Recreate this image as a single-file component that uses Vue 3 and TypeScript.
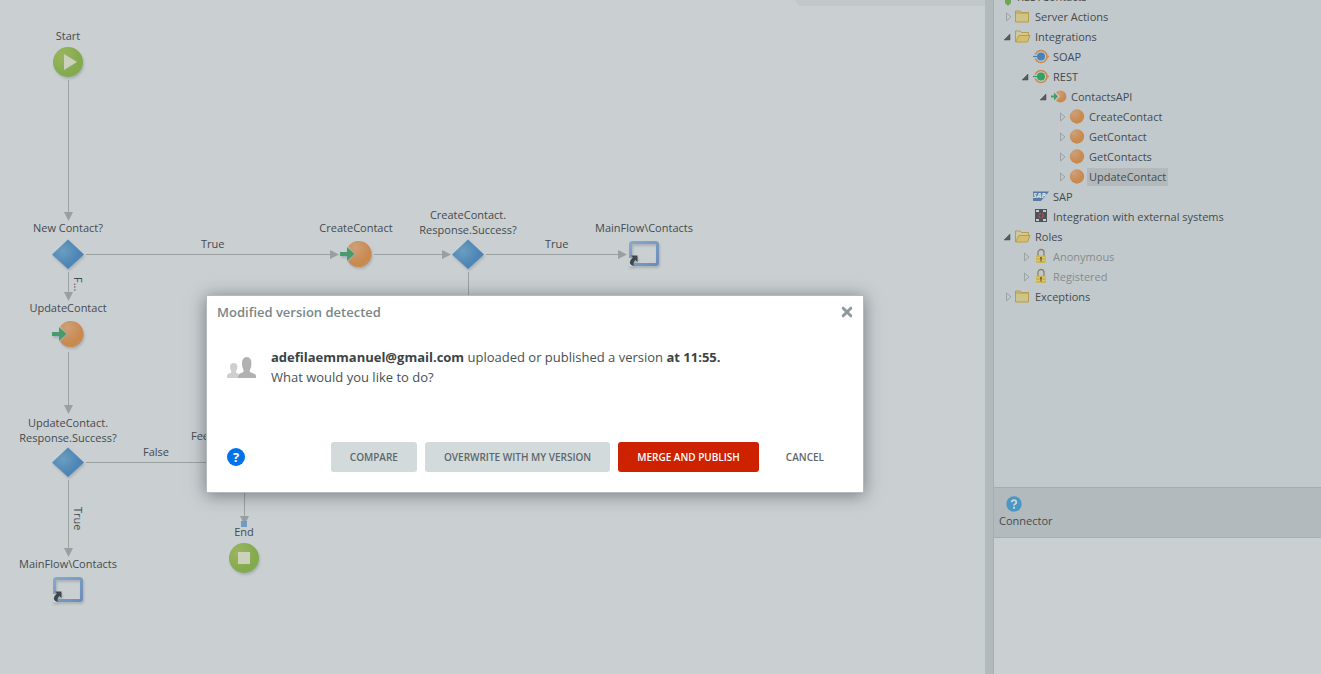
<script setup lang="ts">
type Kind = 'start' | 'end' | 'decision' | 'action' | 'screen'

interface FlowNode {
  kind: Kind
  x: number
  y: number
  label: string[]
}

interface Edge {
  x1: number
  y1: number
  x2: number
  y2: number
  arrow: boolean
}

interface EdgeLabel {
  text: string
  x: number
  y: number
  vertical?: boolean
}

interface TreeRow {
  level: number
  icon: string
  text: string
  toggle?: 'open' | 'closed'
  selected?: boolean
  muted?: boolean
}

const nodes: FlowNode[] = [
  { kind: 'start', x: 68, y: 62, label: ['Start'] },
  { kind: 'decision', x: 68, y: 254, label: ['New Contact?'] },
  { kind: 'action', x: 356, y: 254, label: ['CreateContact'] },
  { kind: 'decision', x: 468, y: 254, label: ['CreateContact.', 'Response.Success?'] },
  { kind: 'screen', x: 644, y: 254, label: ['MainFlow\\Contacts'] },
  { kind: 'action', x: 68, y: 334, label: ['UpdateContact'] },
  { kind: 'decision', x: 68, y: 462, label: ['UpdateContact.', 'Response.Success?'] },
  { kind: 'screen', x: 68, y: 590, label: ['MainFlow\\Contacts'] },
  { kind: 'end', x: 244, y: 558, label: ['End'] },
]

const edges: Edge[] = [
  { x1: 68, y1: 80, x2: 68, y2: 221, arrow: true },
  { x1: 86, y1: 254, x2: 339, y2: 254, arrow: true },
  { x1: 68, y1: 272, x2: 68, y2: 301, arrow: true },
  { x1: 374, y1: 254, x2: 451, y2: 254, arrow: true },
  { x1: 486, y1: 254, x2: 627, y2: 254, arrow: true },
  { x1: 468, y1: 272, x2: 468, y2: 320, arrow: false },
  { x1: 68, y1: 352, x2: 68, y2: 414, arrow: true },
  { x1: 86, y1: 462, x2: 220, y2: 462, arrow: false },
  { x1: 68, y1: 480, x2: 68, y2: 557, arrow: true },
  { x1: 244, y1: 480, x2: 244, y2: 525, arrow: true },
]

const edgeLabels: EdgeLabel[] = [
  { text: 'True', x: 201, y: 236 },
  { text: 'True', x: 545, y: 236 },
  { text: 'False', x: 143, y: 444 },
  { text: 'Fee', x: 191, y: 428 },
  { text: 'F...', x: 71, y: 277, vertical: true },
  { text: 'True', x: 71, y: 507, vertical: true },
]

const rows: TreeRow[] = [
  { level: 0, icon: 'leaf', text: 'RESTContacts' },
  { level: 1, icon: 'folder', text: 'Server Actions', toggle: 'closed' },
  { level: 1, icon: 'folderOpen', text: 'Integrations', toggle: 'open' },
  { level: 2, icon: 'soap', text: 'SOAP' },
  { level: 2, icon: 'rest', text: 'REST', toggle: 'open' },
  { level: 3, icon: 'api', text: 'ContactsAPI', toggle: 'open' },
  { level: 4, icon: 'ball', text: 'CreateContact', toggle: 'closed' },
  { level: 4, icon: 'ball', text: 'GetContact', toggle: 'closed' },
  { level: 4, icon: 'ball', text: 'GetContacts', toggle: 'closed' },
  { level: 4, icon: 'ball', text: 'UpdateContact', toggle: 'closed', selected: true },
  { level: 2, icon: 'sap', text: 'SAP' },
  { level: 2, icon: 'external', text: 'Integration with external systems' },
  { level: 1, icon: 'folderOpen', text: 'Roles', toggle: 'open' },
  { level: 2, icon: 'lock', text: 'Anonymous', toggle: 'closed', muted: true },
  { level: 2, icon: 'lock', text: 'Registered', toggle: 'closed', muted: true },
  { level: 1, icon: 'folder', text: 'Exceptions', toggle: 'closed' },
]

function linePath(e: Edge): string {
  return e.x1 === e.x2
    ? `M${e.x1 + 0.5} ${e.y1}V${e.arrow ? e.y2 - 8 : e.y2}`
    : `M${e.x1} ${e.y1 + 0.5}H${e.arrow ? e.x2 - 8 : e.x2}`
}

function arrowPath(e: Edge): string {
  return e.x1 === e.x2
    ? `M${e.x2 - 4} ${e.y2 - 9}h9l-4.500 9z`
    : `M${e.x2 - 9} ${e.y2 - 4}v9l9 -4.500z`
}

function indent(row: TreeRow): string {
  return `${row.level === 0 ? 3 : 9 + (row.level - 1) * 18}px`
}
</script>

<template>
  <div class="app">
    <svg class="defs" width="0" height="0" aria-hidden="true">
      <defs>
        <radialGradient id="green" cx="0.3" cy="0.3" r="0.6">
          <stop offset="0" stop-color="#9bb55f" />
          <stop offset="1" stop-color="#84aa4e" />
        </radialGradient>
        <radialGradient id="orange" cx="0.3" cy="0.25" r="0.6">
          <stop offset="0" stop-color="#cda079" />
          <stop offset="1" stop-color="#c98a50" />
        </radialGradient>
        <radialGradient id="blue" cx="0.35" cy="0.4" r="0.5">
          <stop offset="0" stop-color="#6b9dbf" />
          <stop offset="1" stop-color="#4c84b5" />
        </radialGradient>
        <linearGradient id="frame" x1="0" y1="0" x2="1" y2="1">
          <stop offset="0" stop-color="#87a8cb" />
          <stop offset="1" stop-color="#6b8db8" />
        </linearGradient>
      </defs>
    </svg>

    <main class="canvas">
      <div class="toolbar-edge"></div>
      <svg class="edges" aria-hidden="true">
        <g v-for="(e, i) in edges" :key="i">
          <path :d="linePath(e)" stroke="#9ca2a4" fill="none" />
          <path v-if="e.arrow" :d="arrowPath(e)" fill="#9aa0a2" />
        </g>
        <rect x="241" y="521" width="6" height="6" fill="#6a9cc4" />
      </svg>

      <div
        v-for="(n, i) in nodes"
        :key="'n' + i"
        class="node"
        :class="{ double: n.label.length > 1 }"
        :style="{ left: n.x - 70 + 'px', top: n.y + 16 + 'px' }"
      >
        <div class="node-label">
          <div v-for="line in n.label" :key="line">{{ line }}</div>
        </div>
        <svg class="node-icon" width="32" height="32" viewBox="0 0 32 32" aria-hidden="true">
          <template v-if="n.kind === 'start'">
            <circle cx="16" cy="16" r="15" fill="url(#green)" />
            <path d="M12 8v16l13-8z" fill="#cbd1bd" />
          </template>
          <template v-else-if="n.kind === 'end'">
            <circle cx="16" cy="16" r="15" fill="url(#green)" />
            <rect x="10" y="10" width="12" height="12" fill="#cbd1bd" />
          </template>
          <path v-else-if="n.kind === 'decision'" d="M16 1.500L32 16.500 16 31 0 16.500z" fill="url(#blue)" />
          <template v-else-if="n.kind === 'action'">
            <path d="M8 8.500a13 13 0 1 1 0 15L15 16z" fill="url(#orange)" />
            <path d="M0 14h7V9l7.500 7L7 23v-5H0z" fill="#489c6b" />
          </template>
          <template v-else>
            <rect x="2.500" y="4.500" width="27" height="22" rx="2" fill="none" stroke="url(#frame)" stroke-width="3" />
            <path d="M0.500 20h5v8.500h-5z" fill="#cacfd2" />
            <path d="M3 17.500h6.500v6.500L7.400 22Q4.800 24.500 6 28Q2.200 27 1.800 24.500Q2 22 4.800 19.600z" fill="#3f474b" />
          </template>
        </svg>
      </div>

      <span
        v-for="(l, i) in edgeLabels"
        :key="'l' + i"
        class="edge-label"
        :class="{ vertical: l.vertical }"
        :style="{ left: l.x + 'px', top: l.y + 'px' }"
      >{{ l.text }}</span>
    </main>

    <aside class="side">
      <ul class="tree">
        <li
          v-for="(r, i) in rows"
          :key="i"
          class="row"
          :class="{ muted: r.muted }"
          :style="{ paddingLeft: indent(r) }"
        >
          <button
            v-if="r.toggle"
            class="toggle"
            type="button"
            :aria-label="r.text"
            :aria-expanded="r.toggle === 'open'"
          >
            <svg width="10" height="10" viewBox="0 0 10 10" aria-hidden="true">
              <path v-if="r.toggle === 'open'" d="M7 2v6H1z" fill="#565e61" stroke="#444b4e" stroke-width="0.500" />
              <path v-else d="M3.500 1v8L8 5z" fill="none" stroke="#9ba2a4" />
            </svg>
          </button>
          <span v-else-if="r.level > 0" class="toggle"></span>
          <svg class="icon" width="16" height="16" viewBox="0 0 16 16" aria-hidden="true">
            <path v-if="r.icon === 'leaf'" d="M8 10h6v4l-3 3-3-3z" fill="#6fa557" />
            <template v-else-if="r.icon === 'folder'">
              <path d="M0.500 13v-11h4.500l1.500 1.500h7v9.500z" fill="#cdc587" stroke="#b99b48" />
              <path d="M0.500 4H13" stroke="#b99b48" />
            </template>
            <template v-else-if="r.icon === 'folderOpen'">
              <path d="M0.500 12.500v-10.500h4.500l1.500 1.500h7v3" fill="#cdc99c" stroke="#b99b48" />
              <path d="M0.500 13l3.500-6.500h11l-2.500 6.500z" fill="#d3bf6c" stroke="#b99b48" />
            </template>
            <template v-else-if="r.icon === 'soap' || r.icon === 'rest'">
              <circle cx="8" cy="7.500" r="6" fill="none" stroke="#c98a50" stroke-width="1.700" />
              <path d="M14 7.500h2" stroke="#c98a50" stroke-width="1.300" />
              <path d="M0 7.500h4" stroke="#c2c9cc" stroke-width="4" />
              <path d="M0 7.500h5" :stroke="r.icon === 'soap' ? '#4483ba' : '#35a065'" stroke-width="1.300" />
              <circle cx="8" cy="7.500" r="4" :fill="r.icon === 'soap' ? '#4483ba' : '#35a065'" />
            </template>
            <template v-else-if="r.icon === 'api'">
              <path d="M5 3.500a6 6 0 1 1 0 8L9 7.500z" fill="url(#orange)" />
              <path d="M0 6.500h3V3.500l4 4-4 4V8.500H0z" fill="#489c6b" />
            </template>
            <circle v-else-if="r.icon === 'ball'" cx="8" cy="7.500" r="7.200" fill="url(#orange)" />
            <template v-else-if="r.icon === 'sap'">
              <path d="M0 2.500h16L8 12H0z" fill="#547ba5" />
              <text x="0" y="9" class="sap-text">SAP</text>
            </template>
            <template v-else-if="r.icon === 'external'">
              <rect x="2" y="0" width="12" height="13" fill="#4b5459" />
              <path d="M3 1h3v2H3zM10 1h3v2h-3zM3 10h3v2H3zM10 10h3v2h-3z" fill="#c6cccf" />
              <circle cx="8" cy="6.500" r="2.200" fill="none" stroke="#c94c44" stroke-width="1.300" stroke-dasharray="2.500 1" />
            </template>
            <template v-else>
              <path d="M5 7V3.500a3 3 0 0 1 6 0V7" fill="none" stroke="#897d6c" stroke-width="1.300" />
              <rect x="3" y="6.500" width="10" height="7.500" rx="1" fill="#ccb654" />
              <path d="M3.500 8.500h9M3.500 11.500h9" stroke="#d6cb8a" stroke-width="0.800" />
              <path d="M8 8v4.500M7 9h2" stroke="#746345" stroke-width="1.300" />
            </template>
          </svg>
          <span class="row-text" :class="{ selected: r.selected }">{{ r.text }}</span>
        </li>
      </ul>
      <section class="props">
        <header class="props-head">
          <svg class="props-icon" width="16" height="16" viewBox="0 0 16 16" aria-hidden="true">
            <circle cx="8" cy="8" r="7.700" fill="#4997c2" />
            <path d="M5.700 6.200a2.300 2.100 0 1 1 3.500 1.800q-1.200.6-1.200 1.600" fill="none" stroke="#ccd5d8" stroke-width="1.900" />
            <rect x="7" y="10.700" width="2" height="2" fill="#ccd5d8" />
          </svg>
          <div>Connector</div>
        </header>
        <div class="props-body"></div>
      </section>
    </aside>

    <div class="dialog" role="dialog" aria-modal="true" aria-labelledby="dialog-title">
      <header class="dialog-head">
        <h1 id="dialog-title">Modified version detected</h1>
        <button class="close" type="button" aria-label="Close">
          <svg width="12" height="12" viewBox="0 0 12 12" aria-hidden="true">
            <path d="M2.200 2.200l7.600 7.600M9.800 2.200l-7.600 7.600" stroke="#8d999c" stroke-width="3" stroke-linecap="round" />
          </svg>
        </button>
      </header>
      <div class="dialog-body">
        <svg class="people" width="30" height="22" viewBox="0 0 30 22" aria-hidden="true">
          <path d="M0 21v-2q0-1.800 2-2.400l2-.8q.6-.5.300-1.600Q3 12.500 3 9.500 3 6 6.700 6t3.700 3.500q0 3-1.300 4.700-.3 1.100.3 1.600l1.600.8V21z" fill="#cfcfcf" />
          <path d="M11 21v-2q0-2 2.500-2.800l2.500-1q1-.7.500-2.200Q15 11 15 6.500 15 0 19.700 0t4.700 6.500q0 4.500-1.500 6.500-.5 1.500.5 2.200l2.500 1Q29 17 29 19v2z" fill="#b1b1b1" />
        </svg>
        <p>
          <strong>adefilaemmanuel@gmail.com</strong> uploaded or published a version <strong>at 11:55.</strong><br />
          What would you like to do?
        </p>
      </div>
      <footer class="dialog-foot">
        <button class="help" type="button" aria-label="Help">?</button>
        <button class="btn" type="button">COMPARE</button>
        <button class="btn" type="button">OVERWRITE WITH MY VERSION</button>
        <button class="btn primary" type="button">MERGE AND PUBLISH</button>
        <button class="btn plain" type="button">CANCEL</button>
      </footer>
    </div>
  </div>
</template>

<style>
body {
  margin: 0;
}
</style>

<style scoped>
.app {
  position: relative;
  display: flex;
  min-height: 100vh;
  overflow: hidden;
  background: #cacfd2;
  color: #444b4e;
  font-family: "Open Sans", "Noto Sans", sans-serif;
  font-size: 11px;
  line-height: 15px;
}

button {
  border: 0;
  padding: 0;
  background: none;
  color: inherit;
  font: inherit;
}

.defs {
  position: absolute;
}

.canvas {
  position: relative;
  flex: 1;
  overflow: hidden;
  border-right: 8px solid #b3babd;
}

.toolbar-edge {
  height: 6px;
  margin-left: 796px;
  border-bottom-left-radius: 6px;
  background: #c2c7c9;
}

.edges {
  position: absolute;
  inset: 0;
  width: 100%;
  height: 100%;
}

.node {
  position: absolute;
  display: flex;
  flex-direction: column;
  align-items: center;
  gap: 3px;
  width: 140px;
  transform: translateY(-100%);
  text-align: center;
}

.node.double {
  gap: 1px;
}

.node-icon {
  overflow: visible;
  filter: drop-shadow(1px 2px 1px rgba(70, 85, 95, 0.25));
}

.edge-label {
  position: absolute;
}

.edge-label.vertical {
  writing-mode: vertical-rl;
}

.side {
  display: flex;
  flex-direction: column;
  width: 327px;
  border-left: 1px solid #a5adb0;
  background: #c2c9cc;
}

.tree {
  flex: 1;
  margin: -13px 0 0;
  padding: 0;
  list-style: none;
}

.row {
  display: flex;
  align-items: center;
  height: 20px;
  white-space: nowrap;
}

.row.muted {
  color: #858b8d;
}

.toggle {
  display: flex;
  width: 12px;
}

.icon {
  margin-right: 2px;
  overflow: visible;
}

.row-text {
  padding: 0 2px;
  line-height: 18px;
}

.row-text.selected {
  background: #b4babc;
}

.sap-text {
  fill: #d9e0e4;
  font-size: 7px;
  font-style: italic;
  font-weight: 800;
}

.props-head {
  height: 41px;
  padding: 8px 5px 0;
  border-top: 1px solid #a5adb0;
  border-bottom: 1px solid #a5adb0;
  background: #b3babd;
}

.props-icon {
  display: block;
  margin: 0 0 1px 7px;
}

.props-body {
  height: 136px;
  background: #cacfd2;
}

.dialog {
  position: absolute;
  top: 295px;
  left: 206px;
  box-sizing: border-box;
  width: 658px;
  padding: 7px 10px 20px;
  border: 1px solid #b3babd;
  background: #fff;
  box-shadow: 0 2px 16px rgba(30, 40, 45, 0.5);
  color: #475154;
  font-size: 13px;
  line-height: 20px;
}

.dialog-head {
  display: flex;
  align-items: center;
  justify-content: space-between;
  height: 18px;
}

h1 {
  margin: 0;
  color: #7a878a;
  font-size: 13px;
  font-weight: 600;
}

.close {
  display: flex;
}

.dialog-body {
  display: flex;
  gap: 14px;
  height: 121px;
  padding-left: 10px;
}

.dialog-body p {
  margin: 26px 0 0;
}

.dialog-body strong {
  color: #3a4447;
}

.people {
  margin-top: 36px;
}

.dialog-foot {
  display: flex;
  align-items: center;
  gap: 8px;
  padding: 0 10px;
}

.help {
  width: 18px;
  height: 18px;
  margin-right: auto;
  border-radius: 50%;
  background: #0073ea;
  color: #fff;
  font-size: 13px;
  font-weight: 700;
  line-height: 18px;
}

.btn {
  height: 30px;
  padding: 0 19px;
  border-radius: 3px;
  background: #d3dadc;
  color: #5d686b;
  font-size: 10px;
  font-weight: 600;
  white-space: nowrap;
}

.btn.primary {
  background: #cc2200;
  color: #fff;
}

.btn.plain {
  background: none;
}
</style>
